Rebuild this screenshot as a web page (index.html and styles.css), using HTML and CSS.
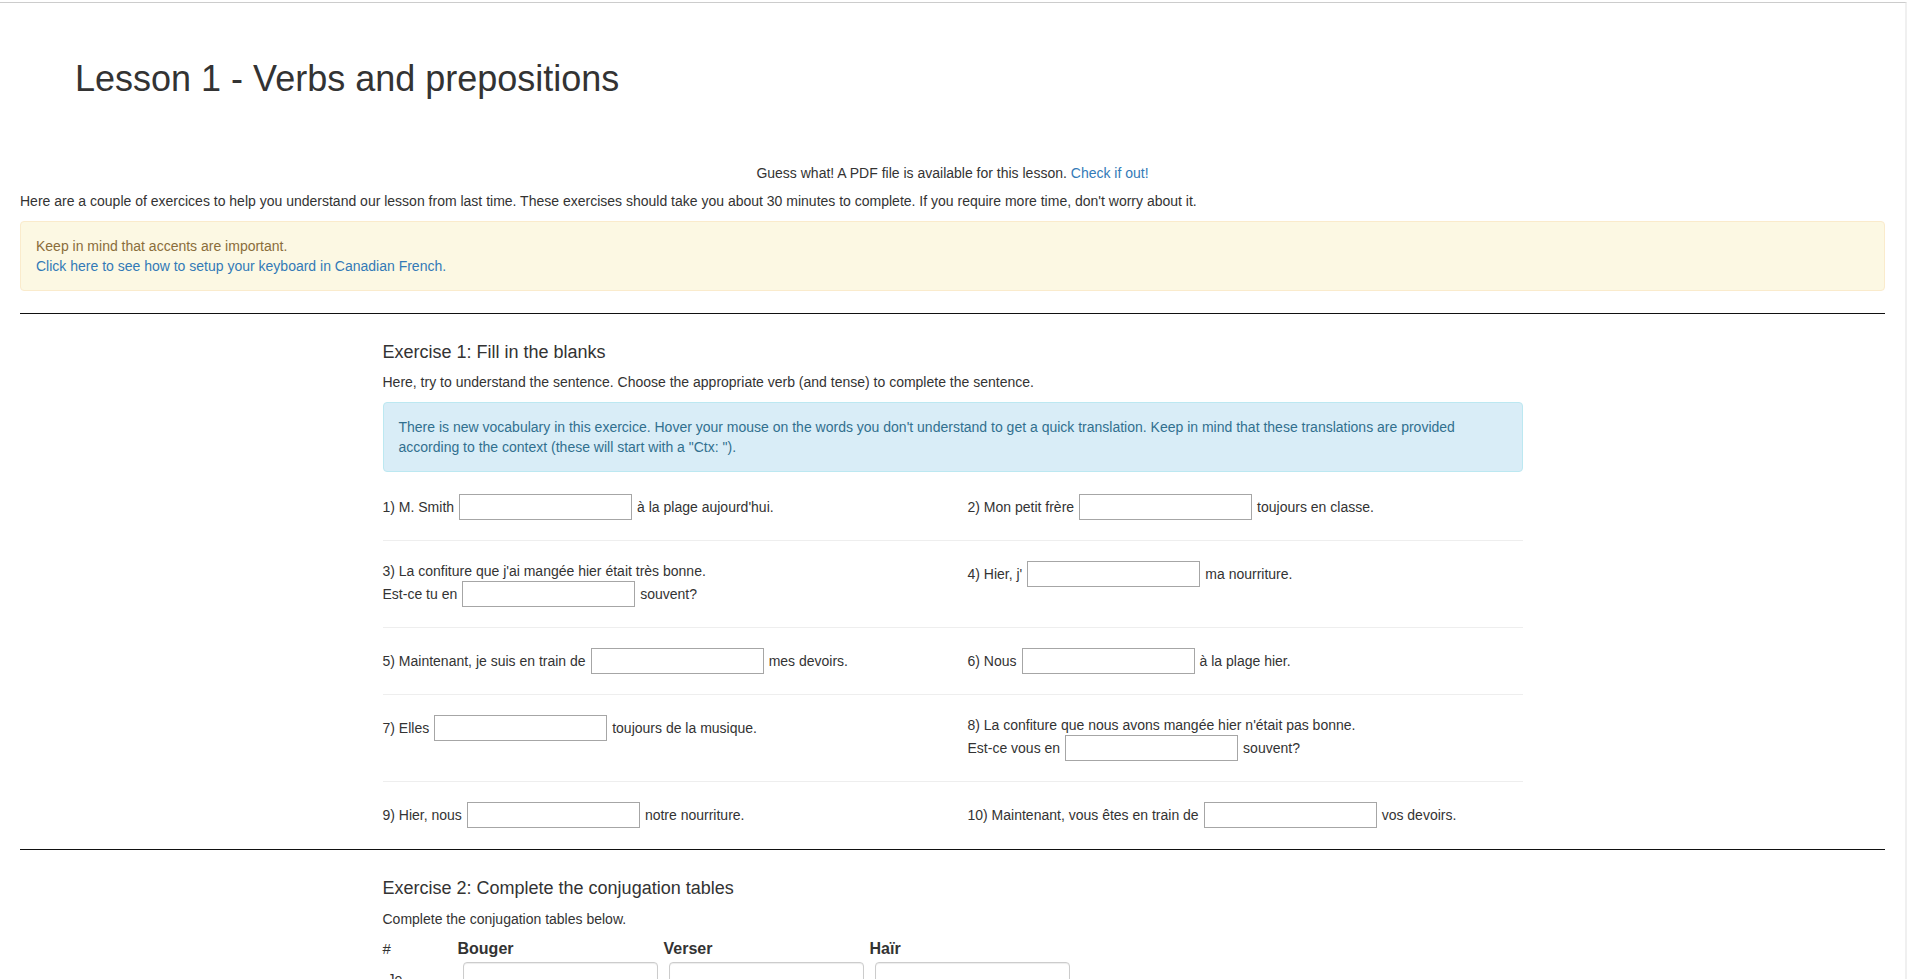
FILE: index.html
```html
<!DOCTYPE html>
<html lang="en">
<head>
<meta charset="utf-8">
<title>Lesson 1 - Verbs and prepositions</title>
<link rel="stylesheet" href="styles.css">
</head>
<body>
<div class="page">
  <header class="lesson-header">
    <h1 class="lesson-title">Lesson 1 - Verbs and prepositions</h1>
  </header>

  <p class="pdf-note">Guess what! A PDF file is available for this lesson. <a href="#" class="link">Check if out!</a></p>
  <p class="intro">Here are a couple of exercices to help you understand our lesson from last time. These exercises should take you about 30 minutes to complete. If you require more time, don't worry about it.</p>

  <div class="alert alert-warning">
    Keep in mind that accents are important.<br>
    <a href="#" class="link">Click here to see how to setup your keyboard in Canadian French.</a>
  </div>

  <hr class="divider">

  <section class="container">
    <h4 class="ex-title">Exercise 1: Fill in the blanks</h4>
    <p class="ex-desc">Here, try to understand the sentence. Choose the appropriate verb (and tense) to complete the sentence.</p>
    <div class="alert alert-info">
      There is new vocabulary in this exercice. Hover your mouse on the words you don't understand to get a quick translation. Keep in mind that these translations are provided according to the context (these will start with a "Ctx: ").
    </div>

    <div class="q-row">
      <div class="q"><div class="q-line"><span>1) M. Smith</span><input type="text" class="blank"><span>à la plage aujourd'hui.</span></div></div>
      <div class="q"><div class="q-line"><span>2) Mon petit frère</span><input type="text" class="blank"><span>toujours en classe.</span></div></div>
    </div>
    <hr class="sep">
    <div class="q-row">
      <div class="q">
        <div class="q-text">3) La confiture que j'ai mangée hier était très bonne.</div>
        <div class="q-line"><span>Est-ce tu en</span><input type="text" class="blank"><span>souvent?</span></div>
      </div>
      <div class="q"><div class="q-line"><span>4) Hier, j'</span><input type="text" class="blank"><span>ma nourriture.</span></div></div>
    </div>
    <hr class="sep">
    <div class="q-row">
      <div class="q"><div class="q-line"><span>5) Maintenant, je suis en train de</span><input type="text" class="blank"><span>mes devoirs.</span></div></div>
      <div class="q"><div class="q-line"><span>6) Nous</span><input type="text" class="blank"><span>à la plage hier.</span></div></div>
    </div>
    <hr class="sep">
    <div class="q-row">
      <div class="q"><div class="q-line"><span>7) Elles</span><input type="text" class="blank"><span>toujours de la musique.</span></div></div>
      <div class="q">
        <div class="q-text">8) La confiture que nous avons mangée hier n'était pas bonne.</div>
        <div class="q-line"><span>Est-ce vous en</span><input type="text" class="blank"><span>souvent?</span></div>
      </div>
    </div>
    <hr class="sep">
    <div class="q-row">
      <div class="q"><div class="q-line"><span>9) Hier, nous</span><input type="text" class="blank"><span>notre nourriture.</span></div></div>
      <div class="q"><div class="q-line"><span>10) Maintenant, vous êtes en train de</span><input type="text" class="blank"><span>vos devoirs.</span></div></div>
    </div>
  </section>

  <hr class="divider">

  <section class="container">
    <h4 class="ex-title">Exercise 2: Complete the conjugation tables</h4>
    <p class="ex-desc">Complete the conjugation tables below.</p>
    <table class="conj">
      <thead>
        <tr>
          <th class="col-num">#</th>
          <th class="col-verb">Bouger</th>
          <th class="col-verb">Verser</th>
          <th class="col-verb">Haïr</th>
        </tr>
      </thead>
      <tbody>
        <tr><td>Je</td><td><input type="text" class="form-control"></td><td><input type="text" class="form-control"></td><td><input type="text" class="form-control"></td></tr>
        <tr><td>Tu</td><td><input type="text" class="form-control"></td><td><input type="text" class="form-control"></td><td><input type="text" class="form-control"></td></tr>
        <tr><td>Il/Elle</td><td><input type="text" class="form-control"></td><td><input type="text" class="form-control"></td><td><input type="text" class="form-control"></td></tr>
        <tr><td>Nous</td><td><input type="text" class="form-control"></td><td><input type="text" class="form-control"></td><td><input type="text" class="form-control"></td></tr>
        <tr><td>Vous</td><td><input type="text" class="form-control"></td><td><input type="text" class="form-control"></td><td><input type="text" class="form-control"></td></tr>
        <tr><td>Ils/Elles</td><td><input type="text" class="form-control"></td><td><input type="text" class="form-control"></td><td><input type="text" class="form-control"></td></tr>
      </tbody>
    </table>
  </section>
</div>
</body>
</html>
```

FILE: styles.css
```css
* {
  box-sizing: border-box;
}

html {
  background: #ffffff;
}

body {
  margin: 2px 0 0 0;
  border-top: 1px solid #cccccc;
  border-right: 2px solid #f0f0f0;
  font-family: "Liberation Sans", Arial, Helvetica, sans-serif;
  font-size: 14px;
  line-height: 20px;
  color: #333333;
  background: #ffffff;
}

.page {
  padding: 0 20px 40px 20px;
}

.link {
  color: #337ab7;
  text-decoration: none;
}

/* Header */
.lesson-header {
  padding: 56px 0 64px 55px;
}

.lesson-title {
  margin: 0;
  font-size: 36px;
  font-weight: normal;
  line-height: 1.1;
  color: #333333;
}

.pdf-note {
  margin: 0 0 8px 0;
  text-align: center;
}

.intro {
  margin: 0 0 10px 0;
}

/* Alerts */
.alert {
  padding: 14px 15px;
  border: 1px solid transparent;
  border-radius: 4px;
  margin-bottom: 20px;
}

.alert-warning {
  background: #fcf8e3;
  border-color: #faebcc;
  color: #8a6d3b;
  margin-bottom: 22px;
}

.alert-info {
  background: #d9edf7;
  border-color: #bce8f1;
  color: #31708f;
  margin-bottom: 22px;
}

.divider {
  margin: 0;
  height: 0;
  border: 0;
  border-top: 1px solid #111111;
}

/* Exercise container */
.container {
  width: 1140px;
  margin: 0 auto;
  padding: 19px 0 21px 0;
}

.ex-title {
  margin: 10px 0;
  font-size: 18px;
  font-weight: normal;
  line-height: 1.1;
  color: #333333;
}

.ex-desc {
  margin: 0 0 10px 0;
}

/* Question rows */
.q-row {
  display: grid;
  grid-template-columns: 1fr 1fr;
  column-gap: 30px;
}

.q {
  display: flex;
  flex-direction: column;
}

.q-text {
  line-height: 20px;
}

.q-line {
  display: flex;
  align-items: center;
  gap: 4px;
  height: 26px;
}

.blank {
  width: 173px;
  height: 26px;
  padding: 1px 2px;
  border: 1px solid #a6a6a6;
  border-radius: 0;
  background: #ffffff;
  font: inherit;
  margin: 0 1px;
}

.sep {
  margin: 20px 0;
  height: 0;
  border: 0;
  border-top: 1px solid #eeeeee;
}

/* Conjugation table */
.conj {
  border-collapse: collapse;
  border-spacing: 0;
}

.conj th {
  text-align: left;
  padding: 0 0 4px 0;
  line-height: 19px;
  vertical-align: middle;
}

.conj th.col-num {
  width: 75px;
  font-weight: normal;
  font-size: 15px;
}

.conj th.col-verb {
  width: 206px;
  font-size: 16px;
  font-weight: bold;
}

.conj td {
  padding: 0 6px 10px 5px;
  vertical-align: middle;
}

.form-control {
  display: block;
  width: 195px;
  height: 34px;
  padding: 6px 12px;
  font: inherit;
  color: #555555;
  background: #ffffff;
  border: 1px solid #cccccc;
  border-radius: 4px;
  box-shadow: inset 0 1px 1px rgba(0, 0, 0, 0.075);
}
```
